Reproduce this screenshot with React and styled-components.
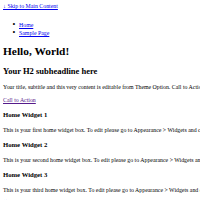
import React from "react";
import styled, { createGlobalStyle } from "styled-components";

const GlobalStyle = createGlobalStyle`
  html, body {
    margin: 0;
    padding: 0;
    background: #fff;
  }
  body {
    font-family: "Liberation Serif", "Times New Roman", serif;
    font-size: 5.85px;
    color: #000;
    overflow: hidden;
  }
`;

const Page = styled.div`
  padding: 2px 3px 0;
  width: 420px;
`;

const SkipLink = styled.a`
  display: block;
  line-height: 8px;
  color: #0000ee;
  text-decoration: underline;
`;

const Nav = styled.ul`
  margin: 11px 0 0;
  padding-left: 9.5px;
  list-style: none;

  li {
    line-height: 8px;
  }

  li::before {
    content: "•";
    display: inline-block;
    width: 6.5px;
    font-size: 8px;
    line-height: 8px;
    vertical-align: top;
  }

  a {
    color: #0000ee;
  }
`;

const Title = styled.h1`
  margin: 7.5px 0 0;
  font-size: 11.4px;
  line-height: 13px;
  font-weight: bold;
`;

const Subtitle = styled.h2`
  margin: 8.5px 0 0;
  font-size: 8.5px;
  line-height: 10px;
  font-weight: bold;
`;

const Text = styled.p`
  margin: ${(p) => p.$gap || 7}px 0 0;
  line-height: 7px;
  white-space: nowrap;
`;

const Action = styled.a`
  color: #551a8b;
`;

const WidgetTitle = styled.h3`
  margin: 7px 0 0;
  font-size: 6.7px;
  line-height: 8px;
  font-weight: bold;
`;

const widgets = [
  { title: "Home Widget 1", body: "This is your first home widget box. To edit please go to Appearance > Widgets and choose 1st Home Widget." },
  { title: "Home Widget 2", body: "This is your second home widget box. To edit please go to Appearance > Widgets and choose 2nd Home Widget." },
  { title: "Home Widget 3", body: "This is your third home widget box. To edit please go to Appearance > Widgets and choose 3rd Home Widget." },
];

const App = () => {
  return (
    <Page>
      <GlobalStyle />
      <SkipLink href="#main">↓ Skip to Main Content</SkipLink>
      <Nav>
        <li>
          <a href="#home">Home</a>
        </li>
        <li>
          <a href="#sample">Sample Page</a>
        </li>
      </Nav>
      <Title>Hello, World!</Title>
      <Subtitle>Your H2 subheadline here</Subtitle>
      <Text $gap={7.5}>
        Your title, subtitle and this very content is editable from Theme Option. Call to Action button and its URL are also editable.
      </Text>
      <Text $gap={6}>
        <Action href="#cta">Call to Action</Action>
      </Text>
      {widgets.map((w) => (
        <React.Fragment key={w.title}>
          <WidgetTitle>{w.title}</WidgetTitle>
          <Text $gap={8}>{w.body}</Text>
        </React.Fragment>
      ))}
      <Text $gap={5}>© 2024 WordPress Theme</Text>
    </Page>
  );
};

export default App;
